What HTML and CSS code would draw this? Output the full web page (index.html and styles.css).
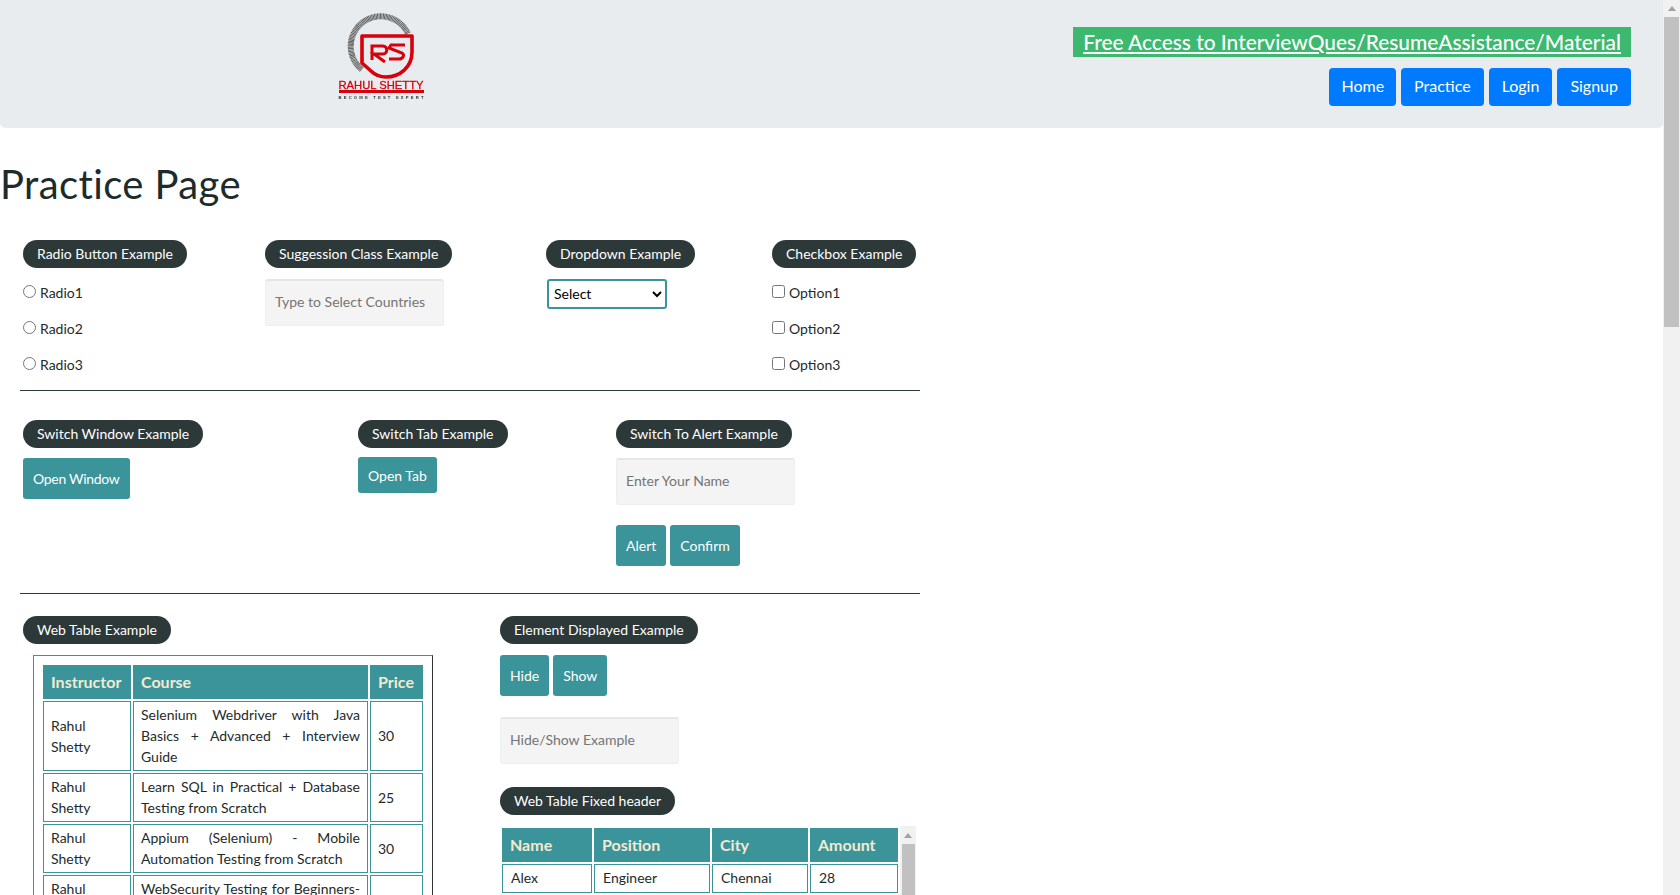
FILE: index.html
```html
<!DOCTYPE html>
<html lang="en">
<head>
<meta charset="utf-8">
<title>Practice Page</title>
<link rel="stylesheet" href="styles.css">
</head>
<body>
<div class="shell">
<main class="page">
  <header class="topbar">
    <svg class="logo" viewBox="0 0 120 100" width="120" height="100" aria-label="Rahul Shetty Academy">
      <path class="logo-ring" d="M40.7 64.5 A30 30 0 1 1 87 28.8"/>
      <path class="logo-shield" d="M41 31 H91 V47 C91 62 79 72 65 72 C59 72 54 70 50 66 L41 58 Z"/>
      <path class="logo-mark" d="M51 55 V41 H62 C67 41 67 49 62 49 H53 L64 57"/>
      <path class="logo-mark" d="M84 40 H70 L68 43 L81 48 C84 50 82 54 78 54 H68"/>
      <text class="logo-name" x="60" y="84" text-anchor="middle" textLength="85" lengthAdjust="spacingAndGlyphs">RAHUL SHETTY</text>
      <rect class="logo-bar" x="18" y="85" width="85" height="3"/>
      <text class="logo-tag" x="60" y="93.5" text-anchor="middle" textLength="85" lengthAdjust="spacing">BECOME TEST EXPERT</text>
    </svg>
    <div class="top-actions">
      <a class="promo" href="#">Free Access to InterviewQues/ResumeAssistance/Material</a>
      <nav class="nav">
        <a class="nav-btn nav-home" href="#">Home</a>
        <a class="nav-btn" href="#">Practice</a>
        <a class="nav-btn" href="#">Login</a>
        <a class="nav-btn" href="#">Signup</a>
      </nav>
    </div>
  </header>

  <h1 class="title">Practice Page</h1>

  <div class="content">
    <section class="row row-one">
      <div class="col">
        <span class="legend">Radio Button Example</span>
        <div class="checks">
          <label class="check"><input type="radio" name="r">Radio1</label>
          <label class="check"><input type="radio" name="r">Radio2</label>
          <label class="check"><input type="radio" name="r">Radio3</label>
        </div>
      </div>
      <div class="col">
        <span class="legend">Suggession Class Example</span>
        <input class="field" type="text" placeholder="Type to Select Countries">
      </div>
      <div class="col">
        <span class="legend">Dropdown Example</span>
        <select class="select"><option>Select</option></select>
      </div>
      <div class="col">
        <span class="legend">Checkbox Example</span>
        <div class="checks">
          <label class="check"><input type="checkbox">Option1</label>
          <label class="check"><input type="checkbox">Option2</label>
          <label class="check"><input type="checkbox">Option3</label>
        </div>
      </div>
    </section>
    <hr class="rule">
    <section class="row row-two">
      <div class="col">
        <span class="legend">Switch Window Example</span>
        <button class="btn btn-tall">Open Window</button>
      </div>
      <div class="col">
        <span class="legend">Switch Tab Example</span>
        <button class="btn btn-short">Open Tab</button>
      </div>
      <div class="col">
        <span class="legend">Switch To Alert Example</span>
        <input class="field field-alert" type="text" placeholder="Enter Your Name">
        <div class="btn-group">
          <button class="btn">Alert</button>
          <button class="btn">Confirm</button>
        </div>
      </div>
    </section>
    <hr class="rule rule-two">
    <section class="row row-three">
      <div class="col">
        <span class="legend">Web Table Example</span>
        <div class="table-frame">
          <table class="grid-table courses">
            <thead><tr><th class="c-ins">Instructor</th><th class="c-course">Course</th><th class="c-price">Price</th></tr></thead>
            <tbody>
              <tr><td>Rahul Shetty</td><td class="just">Selenium Webdriver with Java Basics + Advanced + Interview Guide</td><td>30</td></tr>
              <tr><td>Rahul Shetty</td><td class="just">Learn SQL in Practical + Database Testing from Scratch</td><td>25</td></tr>
              <tr><td>Rahul Shetty</td><td class="just">Appium (Selenium) - Mobile Automation Testing from Scratch</td><td>30</td></tr>
              <tr><td>Rahul Shetty</td><td class="just">WebSecurity Testing for Beginners-QA knowledge to next level</td><td>20</td></tr>
            </tbody>
          </table>
        </div>
      </div>
      <div class="col">
        <span class="legend">Element Displayed Example</span>
        <div class="btn-group btn-group-top">
          <button class="btn">Hide</button>
          <button class="btn">Show</button>
        </div>
        <input class="field field-hide" type="text" placeholder="Hide/Show Example">
        <span class="legend legend-fixed">Web Table Fixed header</span>
        <div class="fixed-box">
          <table class="grid-table fixed">
            <thead><tr><th class="f-name">Name</th><th class="f-pos">Position</th><th class="f-city">City</th><th class="f-amt">Amount</th></tr></thead>
            <tbody><tr><td>Alex</td><td>Engineer</td><td>Chennai</td><td>28</td></tr></tbody>
          </table>
          <div class="inner-scroll">
            <svg class="arrow" viewBox="0 0 8 5" width="8" height="5"><path d="M0 5 L4 0 L8 5 Z"/></svg>
            <div class="inner-thumb"></div>
          </div>
        </div>
      </div>
    </section>
  </div>
</main>
<aside class="scrollbar">
  <svg class="arrow arrow-page" viewBox="0 0 8 5" width="8" height="5"><path d="M0 5 L4 0 L8 5 Z"/></svg>
  <div class="scroll-thumb"></div>
</aside>
</div>
</body>
</html>
```
FILE: styles.css
```css
* { box-sizing: border-box; }
html, body { margin: 0; height: 895px; overflow: hidden; background: #fff; }
body { font-family: "Lato", "Noto Sans", sans-serif; font-size: 14px; color: #212529; }
.shell { display: flex; height: 895px; }
.page { width: 1663px; height: 895px; overflow: hidden; }
.scrollbar { width: 17px; background: #f1f1f1; display: flex; flex-direction: column; align-items: center; padding-top: 6px; }
.arrow path { fill: #a3a3a3; }
.arrow { display: block; flex: none; }
.scroll-thumb { width: 15px; height: 310px; margin-top: 6px; background: #c1c1c1; }

.topbar { height: 128px; background: #e9ecef; border-radius: 0 0 5px 5px; display: flex; justify-content: space-between; padding: 5px 32px 0 321px; }
.logo { display: block; filter: blur(0.35px); }
.logo-ring { fill: none; stroke: #555; stroke-width: 6; stroke-dasharray: 0.9 0.5; }
.logo-shield { fill: none; stroke: #d8000c; stroke-width: 3.6; stroke-linejoin: round; }
.logo-mark { fill: none; stroke: #d8000c; stroke-width: 3; }
.logo-name { font-family: "Liberation Sans", sans-serif; font-size: 11px; fill: #d8000c; stroke: #d8000c; stroke-width: 0.3px; }
.logo-bar { fill: #d8000c; }
.logo-tag { font-family: "Liberation Sans", sans-serif; font-size: 4.2px; font-weight: 700; fill: #333; }
.top-actions { display: flex; flex-direction: column; align-items: flex-end; padding-top: 22px; }
.promo { background: #3cb96f; color: #fff; font-size: 20.9px; font-weight: 500; line-height: 30px; height: 30px; padding: 0 10px; text-decoration: underline; white-space: nowrap; }
.nav { display: flex; gap: 5px; margin-top: 11px; }
.nav-btn { display: block; background: #007bff; color: #fff; font-size: 16px; line-height: 36px; height: 38px; padding: 0 13px; border-radius: 4px; text-decoration: none; }
.nav-home { padding: 0 12px; }

.title { margin: 0; font-size: 40px; font-weight: 400; line-height: 48px; padding-top: 32px; color: #1d2b2b; letter-spacing: 0.4px; }
.content { width: 900px; margin-left: 20px; padding-top: 32px; }
.row { display: grid; }
.row-one { grid-template-columns: 242px 281px 226px 1fr; height: 150px; }
.row-two { grid-template-columns: 335px 258px 1fr; height: 173px; }
.row-three { grid-template-columns: 477px 1fr; }
.col { display: flex; flex-direction: column; align-items: flex-start; padding-left: 3px; }
.legend { display: block; background: #2d3839; color: #fff; font-size: 14px; line-height: 27px; height: 28px; padding: 0 14px; border-radius: 14px; white-space: nowrap; }
.checks { display: flex; flex-direction: column; gap: 16px; margin-top: 14px; }
.check { display: flex; align-items: center; height: 20px; padding-top: 2px; line-height: 22px; color: #1d2b2b; }
.check input { margin: 0 4px 4px 0; width: 13px; height: 13px; }
.field { width: 179px; height: 47px; margin-top: 11px; padding: 0 9px 3px; border: 1px solid #eee; border-top: 2px solid #e6e6e6; border-radius: 3px; background: #f4f4f4; font: 14px "Lato", "Noto Sans", sans-serif; }
.field::placeholder { color: #757575; opacity: 1; }
.select { width: 120px; height: 30px; margin: 11px 0 0 1px; padding: 0 1px 2px; background: #fff; border: 2px solid #3a9499; border-radius: 3px; font: 14px "Lato", "Noto Sans", sans-serif; color: #000; }
.rule { width: 900px; margin: 0; border: 0; border-top: 1px solid #2d3839; }
.row-one + .rule { margin-bottom: 29px; }
.btn { background: #3a9499; color: #fff; border: 0; border-radius: 3px; font: 14px "Lato", "Noto Sans", sans-serif; height: 41px; padding: 0 10px; }
.col > .btn-tall { margin-top: 10px; letter-spacing: -0.3px; }
.col > .btn-short { margin-top: 9px; height: 36px; }
.field-alert { margin-top: 10px; }
.btn-group { display: flex; gap: 4px; margin-top: 20px; }
.btn-group-top { margin-top: 11px; }
.rule-two { margin-bottom: 22px; }
.field-hide { margin-top: 21px; }
.legend-fixed { margin-top: 23px; }
.table-frame { margin: 11px 0 0 10px; padding: 9px; border: 1px solid #7a7a7a; border-right-color: #333; width: 400px; }
.grid-table { border-collapse: separate; border-spacing: 2px; color: #1d2b2b; line-height: 21px; table-layout: fixed; }
.grid-table th { background: #3a9499; color: #f3ead2; font-size: 16px; font-weight: 700; text-align: left; height: 34px; padding: 0 8px 1px; }
.grid-table td { border: 1px solid #3a9499; padding: 2px 7px 3px; }
.just { text-align: justify; }
.courses { width: 384px; margin: -2px 0 0 -2px; }
.c-ins { width: 88px; } .c-course { width: 235px; } .c-price { width: 53px; }
.fixed-box { display: flex; margin-top: 11px; height: 120px; }
.fixed { width: 400px; height: 0; }
.f-name { width: 90px; } .f-pos { width: 116px; } .f-city { width: 96px; } .f-amt { width: 88px; }
.fixed td { height: 29px; padding: 0 8px 2px; }
.inner-scroll { width: 16px; background: #f1f1f1; display: flex; flex-direction: column; align-items: center; padding-top: 7px; }
.inner-thumb { width: 13px; height: 100px; margin-top: 6px; background: #c1c1c1; }
```
